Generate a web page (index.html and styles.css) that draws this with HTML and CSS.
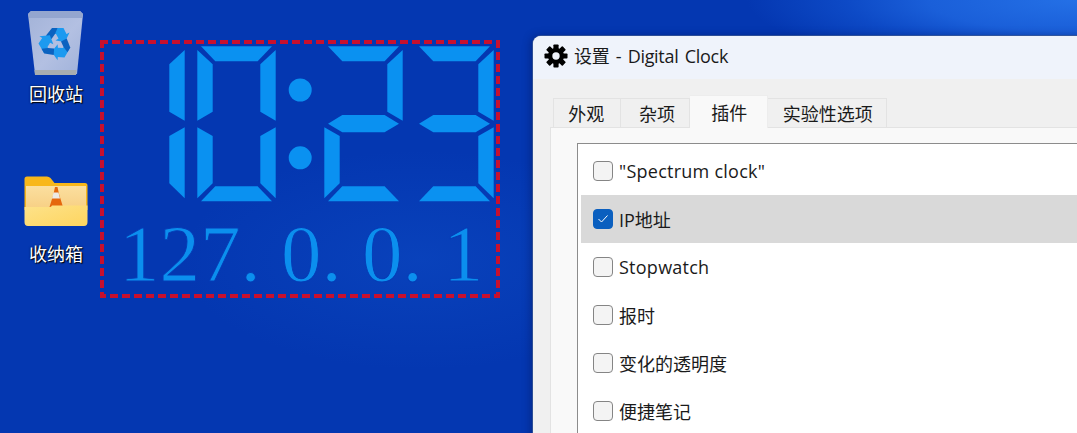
FILE: index.html
```html
<!DOCTYPE html>
<html lang="zh-CN">
<head>
<meta charset="utf-8">
<title>设置 - Digital Clock</title>
<link rel="stylesheet" href="styles.css">
</head>
<body>
<main class="desktop">
  <div class="shortcuts">
    <div class="shortcut">
      <svg class="shortcut-icon" width="56" height="70" viewBox="29 11 56 70">
        <defs>
          <linearGradient id="binBody" x1="0" y1="0" x2="1" y2="1">
            <stop offset="0" stop-color="#a3b3d8"/>
            <stop offset=".55" stop-color="#b3c0e2"/>
            <stop offset="1" stop-color="#a0b2da"/>
          </linearGradient>
          <g id="recycle-arrow">
            <path class="arrow-light" d="M-3-15H8L11-9 14-10.500 9.500-1 0-2.500 3-4.500 .5-9H-3Z"/>
            <path class="arrow-dark" d="M-3.500-15-9.500-7.500-4-4-.5-9 2-15Z"/>
          </g>
        </defs>
        <path d="M29 14 32 11H81L84 14 78 74H36Z" fill="url(#binBody)"/>
        <path d="M29 14 32 11H81L84 14 83 18H30Z" fill="#94a6cf"/>
        <path d="M35.500 70H77.500L77 75H36Z" fill="#a8adb0"/>
        <g transform="translate(56.500 43)">
          <use href="#recycle-arrow"/>
          <use href="#recycle-arrow" transform="rotate(120)"/>
          <use href="#recycle-arrow" transform="rotate(240)"/>
        </g>
      </svg>
      <span class="shortcut-label">回收站</span>
    </div>
    <div class="shortcut">
      <svg class="shortcut-icon" width="66" height="70" viewBox="23 171 66 70">
        <defs>
          <linearGradient id="folderFront" x1="0" y1="0" x2="1" y2="1">
            <stop offset="0" stop-color="#fde28a"/>
            <stop offset="1" stop-color="#fed55f"/>
          </linearGradient>
          <linearGradient id="folderPaper" x1="0" y1="0" x2="0" y2="1">
            <stop offset="0" stop-color="#fbdf9f"/>
            <stop offset="1" stop-color="#f7cf83"/>
          </linearGradient>
        </defs>
        <path d="M24.500 179Q24.500 176.500 27 176.500H47Q49 176.500 50.500 178L54.500 183H85Q87.500 183 87.500 185.500V210H24.500Z" fill="#f8b71a"/>
        <path d="M26 186H86V210H26Z" fill="url(#folderPaper)"/>
        <path d="M49.500 207 53.500 194 55 187H57.500L59 194 63 207Z" fill="#e5670d"/>
        <path d="M53.500 192.500H58.500L60 198.500H52Z" fill="#eceae6"/>
        <path d="M24.500 207H50Q51 207 52 205.500H87.500V222Q87.500 226 84 226H28Q24.500 226 24.500 222Z" fill="url(#folderFront)"/>
      </svg>
      <span class="shortcut-label">收纳箱</span>
    </div>
  </div>

  <svg class="clock" width="400" height="258" viewBox="100 40 400 258" role="img">
    <defs>
      <path id="seg-a" d="M3.700 46.300H74.700L60.300 61.300H18Z"/>
      <path id="seg-b" d="M78.400 50V120.700L63 111.700V64.300Z"/>
      <path id="seg-c" d="M78.400 127.300V198.300L63 183.300V136Z"/>
      <path id="seg-d" d="M3.700 201.300H74.700L60.300 186.300H18Z"/>
      <path id="seg-e" d="M0 127.300 15.400 136V183.300L0 198.300Z"/>
      <path id="seg-f" d="M0 50 15.400 64.300V111.700L0 120.700Z"/>
      <path id="seg-g" d="M3.700 123.700 18 115H60.300L74.700 123.700 60.300 132.300H18Z"/>
    </defs>
    <g class="segments">
      <g transform="translate(106.300)"><use href="#seg-b"/><use href="#seg-c"/></g>
      <g transform="translate(197.300)"><use href="#seg-a"/><use href="#seg-b"/><use href="#seg-c"/><use href="#seg-d"/><use href="#seg-e"/><use href="#seg-f"/></g>
      <circle cx="300.200" cy="90" r="11.500"/>
      <circle cx="300.200" cy="157.800" r="11.500"/>
      <g transform="translate(324.300)"><use href="#seg-a"/><use href="#seg-b"/><use href="#seg-g"/><use href="#seg-e"/><use href="#seg-d"/></g>
      <g transform="translate(415.300)"><use href="#seg-a"/><use href="#seg-b"/><use href="#seg-g"/><use href="#seg-c"/><use href="#seg-d"/></g>
    </g>
    <text class="ip" x="119" y="281" xml:space="preserve">127. 0. 0. 1</text>
    <g class="frame">
      <path d="M100 42H500"/>
      <path d="M102 40V298"/>
      <path d="M498 40V298"/>
      <path class="frame-bottom" d="M100 296H500"/>
    </g>
  </svg>

  <section class="window">
    <header class="titlebar">
      <svg class="gear" width="24" height="24" viewBox="-12 -12 24 24">
        <g>
          <rect x="-2.600" y="-11.500" width="5.200" height="23" rx=".8"/>
          <rect x="-2.600" y="-11.500" width="5.200" height="23" rx=".8" transform="rotate(45)"/>
          <rect x="-2.600" y="-11.500" width="5.200" height="23" rx=".8" transform="rotate(90)"/>
          <rect x="-2.600" y="-11.500" width="5.200" height="23" rx=".8" transform="rotate(135)"/>
        </g>
        <circle r="8"/>
        <circle class="gear-hole" r="3.700"/>
      </svg>
      <h1 class="title">设置 - Digital Clock</h1>
    </header>
    <div class="window-body">
      <div class="tabs">
        <div class="tab tab-looks">外观</div>
        <div class="tab tab-misc">杂项</div>
        <div class="tab tab-active">插件</div>
        <div class="tab tab-lab">实验性选项</div>
      </div>
      <div class="pane">
        <ul class="plugins">
          <li class="plugin"><span class="check"></span><span class="latin">"Spectrum clock"</span></li>
          <li class="plugin plugin-current"><span class="check check-on"><svg width="12" height="10" viewBox="0 0 12 10"><path d="M1.500 5 4.500 8 10.500 1.500"/></svg></span>IP地址</li>
          <li class="plugin"><span class="check"></span><span class="latin">Stopwatch</span></li>
          <li class="plugin"><span class="check"></span>报时</li>
          <li class="plugin"><span class="check"></span>变化的透明度</li>
          <li class="plugin"><span class="check"></span>便捷笔记</li>
        </ul>
      </div>
    </div>
  </section>
</main>
</body>
</html>
```
FILE: styles.css
```css
* { box-sizing: border-box; }
html, body { margin: 0; height: 100%; }
body { overflow: hidden; font-family: "Open Sans", "Noto Sans CJK SC", sans-serif; }

.desktop {
  position: relative;
  width: 1077px;
  height: 433px;
  overflow: hidden;
  background:
    radial-gradient(ellipse 330px 70px at 1077px 0, #2470e6 0, #1a5fd9 45%, rgba(16, 80, 205, .75) 70%, rgba(10, 60, 180, 0) 100%),
    radial-gradient(ellipse 240px 110px at 420px 260px, rgba(20, 90, 210, .3), rgba(20, 90, 210, 0)),
    #0437b1;
}

.shortcuts {
  position: absolute;
  left: 0;
  top: 11px;
  width: 112px;
  display: flex;
  flex-direction: column;
  gap: 64px;
}
.shortcut { display: flex; flex-direction: column; align-items: center; height: 96px; }
.shortcut-icon { display: block; }
.shortcut-label {
  font-size: 18px;
  line-height: 26px;
  color: #fff;
  text-shadow: 1px 1px 1px #000, 0 0 2px rgba(0, 0, 0, .7);
}
.arrow-light { fill: #1c9af0; }
.arrow-dark { fill: #0b62c0; }

.clock { position: absolute; left: 100px; top: 40px; }
.segments { fill: #0a91f1; }
.ip {
  font-family: "Liberation Serif", serif;
  font-size: 81px;
  fill: #0b8fee;
  stroke: #063cb6;
  stroke-width: .9;
}
.frame { fill: none; stroke: #c8102e; stroke-width: 4; stroke-dasharray: 8 4; }
.frame-bottom { stroke-dashoffset: 2; }

.window {
  position: absolute;
  left: 533px;
  top: 36px;
  width: 640px;
  height: 500px;
  border-radius: 8px 8px 0 0;
  overflow: hidden;
  background: #f0f0f0;
  color: #1a1a1a;
  box-shadow: 0 0 0 1px rgba(60, 90, 150, .75), -2px 0 8px rgba(0, 20, 80, .45);
}
.titlebar {
  display: flex;
  align-items: center;
  gap: 6px;
  height: 43px;
  padding: 0 0 3px 11px;
  background: #eff3fb;
}
.gear { display: block; fill: #000; }
.gear-hole { fill: #eff3fb; }
.title { margin: 0; font-size: 18px; font-weight: 400; line-height: 24px; word-spacing: 2px; letter-spacing: -.3px; }

.window-body { padding: 16px 0 0 17px; }
.tabs { display: flex; height: 32px; padding-left: 3px; align-items: flex-end; font-size: 18px; }
.tab {
  height: 29px;
  display: flex;
  align-items: center;
  justify-content: center;
  padding-bottom: 1px;
  background: #f0f0f0;
  border: 1px solid #e3e3e3;
  border-bottom: 0;
  border-left-width: 0;
}
.tab-looks { width: 67.500px; border-left-width: 1px; padding-right: 1px; }
.tab-misc { width: 69px; padding-left: 5px; }
.tab-active {
  width: 78.500px;
  height: 33px;
  padding-left: 2px;
  padding-bottom: 0;
  background: #f9f9f9;
  border-top-color: #ededed;
  position: relative;
  margin-bottom: -1px;
  z-index: 1;
  border-right-color: #ededed;
}
.tab-lab { width: 118.500px; padding-left: 2px; }

.pane {
  height: 400px;
  padding: 15px 0 0 26px;
  background: #f9f9f9;
  border-top: 1px solid #e3e3e3;
  border-left: 1px solid #e3e3e3;
}
.plugins {
  list-style: none;
  margin: 0;
  padding: 3px;
  background: #fff;
  border: 1px solid #8c8c8c;
  font-size: 18px;
}
.plugin {
  display: flex;
  align-items: center;
  gap: 6px;
  height: 48px;
  padding-left: 12px;
}
.latin { letter-spacing: .25px; }
.plugin-current { background: #d9d9d9; }
.check {
  flex: none;
  display: flex;
  align-items: center;
  justify-content: center;
  width: 20px;
  height: 20px;
  background: #f4f4f4;
  border: 1.500px solid #858585;
  border-radius: 4px;
}
.plugin-current .check-on { background: #0a5fbf; border-color: #0a5fbf; }
.check-on svg { display: block; fill: none; stroke: #fff; stroke-width: 1; }
```
